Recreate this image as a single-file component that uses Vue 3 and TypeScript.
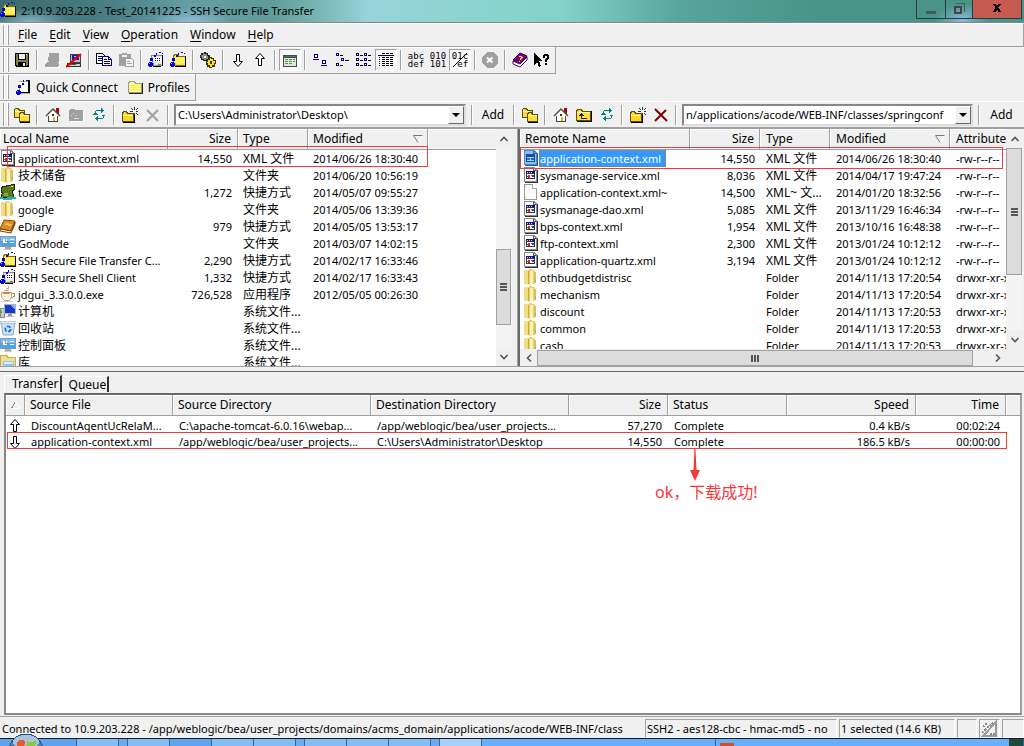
<script setup lang="ts">
import { ref } from 'vue'

interface FileRow {
  icon: string
  name: string
  size?: string
  type: string
  modified?: string
  attributes?: string
}
interface Tool {
  id: string
  label: string
  pressed?: boolean
  text?: [string, string]
}

const hasCjk = (s: string): boolean => /[\u4e00-\u9fff]/.test(s)

const menus = ['File', 'Edit', 'View', 'Operation', 'Window', 'Help']

const toolGroups: Tool[][] = [
  [{ id: 'save', label: 'Save' }],
  [{ id: 'connect', label: 'Connect' }, { id: 'disconnect', label: 'Disconnect' }],
  [{ id: 'copy', label: 'Copy' }, { id: 'paste', label: 'Paste' }],
  [{ id: 'shell', label: 'New terminal' }, { id: 'sshfolder', label: 'New file transfer' }],
  [{ id: 'gears', label: 'Settings' }],
  [{ id: 'down', label: 'Download' }, { id: 'up', label: 'Upload' }],
  [{ id: 'view', label: 'Transfer view', pressed: true }],
  [
    { id: 'large', label: 'Large icons' },
    { id: 'small', label: 'Small icons' },
    { id: 'list', label: 'List' },
    { id: 'details', label: 'Details', pressed: true },
  ],
  [
    { id: 'ascii', label: 'ASCII', text: ['abc', 'def'] },
    { id: 'binary', label: 'Binary', text: ['010', '101'] },
    { id: 'auto', label: 'Auto select', text: ['01c', '\u00a0ef'], pressed: true },
  ],
  [{ id: 'stop', label: 'Stop' }],
  [{ id: 'book', label: 'Help' }, { id: 'whats', label: 'Context help' }],
]

const localTools = [['folders'], ['home', 'upgray', 'refresh'], ['newfolder', 'delgray']]
const remoteTools = [['folders'], ['home', 'upfolder', 'refresh'], ['newfolder', 'delred']]

const localPath = ref('C:\\Users\\Administrator\\Desktop\\')
const remotePath = ref('n/applications/acode/WEB-INF/classes/springconf')

const localRows: FileRow[] = [
  { icon: 'xml', name: 'application-context.xml', size: '14,550', type: 'XML 文件', modified: '2014/06/26 18:30:40' },
  { icon: 'folder', name: '技术储备', type: '文件夹', modified: '2014/06/20 10:56:19' },
  { icon: 'toad', name: 'toad.exe', size: '1,272', type: '快捷方式', modified: '2014/05/07 09:55:27' },
  { icon: 'folder', name: 'google', type: '文件夹', modified: '2014/05/06 13:39:36' },
  { icon: 'diary', name: 'eDiary', size: '979', type: '快捷方式', modified: '2014/05/05 13:53:17' },
  { icon: 'panel', name: 'GodMode', type: '文件夹', modified: '2014/03/07 14:02:15' },
  { icon: 'sshfolder', name: 'SSH Secure File Transfer C...', size: '2,290', type: '快捷方式', modified: '2014/02/17 16:33:46' },
  { icon: 'shell', name: 'SSH Secure Shell Client', size: '1,332', type: '快捷方式', modified: '2014/02/17 16:33:43' },
  { icon: 'cup', name: 'jdgui_3.3.0.0.exe', size: '726,528', type: '应用程序', modified: '2012/05/05 00:26:30' },
  { icon: 'computer', name: '计算机', type: '系统文件...' },
  { icon: 'recycle', name: '回收站', type: '系统文件...' },
  { icon: 'panel', name: '控制面板', type: '系统文件...' },
  { icon: 'library', name: '库', type: '系统文件...' },
]

const remoteRows: FileRow[] = [
  { icon: 'xmlsel', name: 'application-context.xml', size: '14,550', type: 'XML 文件', modified: '2014/06/26 18:30:40', attributes: '-rw-r--r--' },
  { icon: 'xml', name: 'sysmanage-service.xml', size: '8,036', type: 'XML 文件', modified: '2014/04/17 19:47:24', attributes: '-rw-r--r--' },
  { icon: 'blank', name: 'application-context.xml~', size: '14,500', type: 'XML~ 文...', modified: '2014/01/20 18:32:56', attributes: '-rw-r--r--' },
  { icon: 'xml', name: 'sysmanage-dao.xml', size: '5,085', type: 'XML 文件', modified: '2013/11/29 16:46:34', attributes: '-rw-r--r--' },
  { icon: 'xml', name: 'bps-context.xml', size: '1,954', type: 'XML 文件', modified: '2013/10/16 16:48:38', attributes: '-rw-r--r--' },
  { icon: 'xml', name: 'ftp-context.xml', size: '2,300', type: 'XML 文件', modified: '2013/01/24 10:12:12', attributes: '-rw-r--r--' },
  { icon: 'xml', name: 'application-quartz.xml', size: '3,194', type: 'XML 文件', modified: '2013/01/24 10:12:12', attributes: '-rw-r--r--' },
  { icon: 'folder', name: 'othbudgetdistrisc', type: 'Folder', modified: '2014/11/13 17:20:54', attributes: 'drwxr-xr-x' },
  { icon: 'folder', name: 'mechanism', type: 'Folder', modified: '2014/11/13 17:20:54', attributes: 'drwxr-xr-x' },
  { icon: 'folder', name: 'discount', type: 'Folder', modified: '2014/11/13 17:20:53', attributes: 'drwxr-xr-x' },
  { icon: 'folder', name: 'common', type: 'Folder', modified: '2014/11/13 17:20:53', attributes: 'drwxr-xr-x' },
  { icon: 'folder', name: 'cash', type: 'Folder', modified: '2014/11/13 17:20:53', attributes: 'drwxr-xr-x' },
]

const transfers = [
  { icon: 'up', file: 'DiscountAgentUcRelaM...', src: 'C:\\apache-tomcat-6.0.16\\webap...', dst: '/app/weblogic/bea/user_projects...', size: '57,270', status: 'Complete', speed: '0.4 kB/s', time: '00:02:24' },
  { icon: 'down', file: 'application-context.xml', src: '/app/weblogic/bea/user_projects...', dst: 'C:\\Users\\Administrator\\Desktop', size: '14,550', status: 'Complete', speed: '186.5 kB/s', time: '00:00:00' },
]
</script>

<template>
  <svg class="defs" width="0" height="0" aria-hidden="true">
    <symbol id="save" viewBox="0 0 16 16">
      <path d="M1 1h14v14H2L1 14z" fill="#000" /><path d="M2 2h2v6h8V2h2v11h-1v1H3v-1H2z" fill="#808040" />
      <path d="M5 2h6v5H5z" fill="#f0f0f0" /><path d="M12 2h1v1h-1z" fill="#fff" /><path d="M4 10h8v4H4z" fill="#000" /><path d="M9 11h2v3H9z" fill="#e8e8e8" />
    </symbol>
    <symbol id="connect" viewBox="0 0 16 16">
      <path d="M5 1h10v8l-1 2h1v3l-2 1H1v-3l2-2h2L4 9z" fill="#a0a0a0" /><path d="M15 10h1v5H3v1h12l1-1z" fill="#fff" />
    </symbol>
    <symbol id="disconnect" viewBox="0 0 16 16">
      <path d="M4 2h10v8H4z" fill="#c0c0c0" stroke="#444" /><path d="M6 3h7v5H6z" fill="#0020c0" /><path d="M8 4h2v1H8z" fill="#8cf" />
      <path d="M1.500 11.500h13v3h-13z" fill="#d0d0d0" stroke="#333" /><path d="M3 12h7v1H3z" fill="#555" /><path d="M0 15L15 2" stroke="#f00000" stroke-width="2.200" shape-rendering="auto" />
    </symbol>
    <symbol id="copy" viewBox="0 0 16 16">
      <path d="M.5 1.500h6l2 2v8h-8z" fill="#fff" stroke="#000" /><path d="M2 4h4v1H2zM2 6h4v1H2zM2 8h4v1H2z" fill="#000080" />
      <path d="M6.500 4.500h6l3 3v6h-9z" fill="#fff" stroke="#000080" /><path d="M8 7h3v1H8zM8 9h6v1H8zM8 11h6v1H8z" fill="#000080" /><path d="M12.500 4v3.500H16" fill="none" stroke="#000080" />
    </symbol>
    <symbol id="paste" viewBox="0 0 16 16">
      <path d="M1 2h3V1h5v1h4v12H1z" fill="#a0a0a0" /><path d="M4 3h5v2H4z" fill="#f4f4f4" /><path d="M7.500 6.500h6l2 2v6h-8z" fill="#f4f4f4" stroke="#a0a0a0" /><path d="M9 9h3v1H9zM9 11h5v1H9z" fill="#a0a0a0" />
    </symbol>
    <symbol id="shell" viewBox="0 0 16 16">
      <path d="M3.500 3.500h11v10h-9z" fill="#e8e8e8" stroke="#888" /><path d="M14 3h1v11h-2v1H5v-1h9z" fill="#000" /><path d="M6 5h7v5H6z" fill="#fff" />
      <path d="M7 6h1v1H7zM9 6h1v1H9zM11 6h1v1h-1zM7 8h1v1H7zM9 8h1v1H9zM11 8h1v1h-1z" fill="#000" /><path d="M10 12h3v1h-3z" fill="#777" />
      <path d="M0 11h1v-1h3v1h1v3H4v1H1v-1H0zM2 6h3v3H2zM6 3h2v2H6zM8 1h1v2H8zM11 0h2v1h-2zM14 1h1v1h-1z" fill="#0000e0" /><path d="M1 11h1v1H1z" fill="#8cf" />
    </symbol>
    <symbol id="sshfolder" viewBox="0 0 16 16">
      <path d="M3.500 4.500l1-2h3l1 2h7v9h-12z" fill="#ffe830" stroke="#777700" /><path d="M5 6h10v1H5zM6 8h9v1H6zM6 10h9v1H6z" fill="#fff29a" /><path d="M15 4h1v11H5v-1h10z" fill="#000" />
      <path d="M0 11h1v-1h3v1h1v3H4v1H1v-1H0zM2 6h3v3H2zM6 3h2v2H6zM8 1h1v2H8zM11 0h2v1h-2zM14 1h1v1h-1z" fill="#0000e0" /><path d="M1 11h1v1H1z" fill="#8cf" />
    </symbol>
    <symbol id="quick" viewBox="0 0 16 16">
      <path d="M4 2h10v12H4z" fill="#fff" stroke="#aaa" /><path d="M13 1h2v13H5v-1h8z" fill="#000" /><path d="M4 3h9v9H6z" fill="#fff" />
      <path d="M1 12h1v-1h3v1h1v3H5v1H2v-1H1zM3 6h3v3H3zM7 4h2v2H7zM8 1h1v2H8zM11 1h2v1h-2z" fill="#0000e0" /><path d="M2 12h1v1H2z" fill="#8cf" />
    </symbol>
    <symbol id="profiles" viewBox="0 0 16 16">
      <path d="M.5 4.500l1-2h5l1 2h6v9H.5z" fill="#ffff80" stroke="#999" /><path d="M2 6h11v1H2zM2 8h11v1H2zM2 10h11v1H2z" fill="#f5e960" /><path d="M14 4h1v11H1v-1h13z" fill="#222" />
    </symbol>
    <symbol id="gears" viewBox="0 0 16 16">
      <path d="M4 0h2v1h2v2h2v4H8v2H3V8H1V6H0V3h1V1h3z" fill="#222" /><path d="M3 1h1v1h3v2h1v3H6v1H4V7H2V5H1V3h2z" fill="#909080" /><path d="M4 4h2v2H4z" fill="#fff" />
      <path d="M9 5h3v1h2v2h2v4h-1v3h-3v1H9v-1H7v-2H6V9h1V7h2z" fill="#3c3800" /><path d="M10 6h1v1h2v2h2v2h-1v2h-2v2h-2v-2H8v-2H7v-1h1V8h2z" fill="#ffe020" /><path d="M10 9h2v3h-2z" fill="#333" />
    </symbol>
    <symbol id="down" viewBox="0 0 16 16">
      <path d="M6.500 2.500h3v7h3L8 14.500 3.500 9.500h3z" fill="#fff" stroke="#000" shape-rendering="auto" />
    </symbol>
    <symbol id="up" viewBox="0 0 16 16">
      <path d="M6.500 13.500h3v-7h3L8 1.500 3.500 6.500h3z" fill="#fff" stroke="#000" shape-rendering="auto" />
    </symbol>
    <symbol id="view" viewBox="0 0 16 16">
      <path d="M1 3h14v12H1z" fill="#405048" /><path d="M2 4h12v1H2z" fill="#506890" /><path d="M2 6h12v8H2z" fill="#dcecd4" />
      <path d="M3 7h3v1H3zM7 7h3v1H7zM11 7h2v1h-2zM3 9h3v1H3zM7 9h3v1H7zM11 9h2v1h-2zM3 11h3v1H3zM7 11h3v1H7z" fill="#5f9060" />
    </symbol>
    <symbol id="large" viewBox="0 0 16 16">
      <path d="M2.500 2.500h3v3h-3zM10.500 8.500h3v3h-3z" fill="#fff" stroke="#000080" /><path d="M1 7h6v1H1zM9 13h6v1H9z" fill="#000080" />
    </symbol>
    <symbol id="small" viewBox="0 0 16 16">
      <path d="M2.500 1.500h2v2h-2zM7.500 6.500h2v2h-2zM2.500 11.500h2v2h-2z" fill="#fff" stroke="#000080" /><path d="M6 3h3v1H6zM11 8h4v1h-4zM6 13h3v1H6z" fill="#000" />
    </symbol>
    <symbol id="list" viewBox="0 0 16 16">
      <path d="M.5 1.500h2v2h-2zM.5 6.500h2v2h-2zM.5 11.500h2v2h-2zM8.500 1.500h2v2h-2zM8.500 6.500h2v2h-2zM8.500 11.500h2v2h-2z" fill="#fff" stroke="#000080" />
      <path d="M4 3h3v1H4zM4 8h3v1H4zM4 13h3v1H4zM12 3h3v1h-3zM12 8h3v1h-3zM12 13h3v1h-3z" fill="#000" />
    </symbol>
    <symbol id="details" viewBox="0 0 16 16">
      <path d="M4 1h3v1H4zM8 1h3v1H8zM12 1h3v1h-3z" fill="#000" /><path d="M0 3h16v1H0z" fill="#000080" />
      <path d="M1 5h1v1H1zM1 7h1v1H1zM1 9h1v1H1zM1 11h1v1H1zM1 13h1v1H1z" fill="#000080" />
      <path d="M4 5h3v1H4zM8 5h3v1H8zM12 5h3v1h-3zM4 7h3v1H4zM8 7h3v1H8zM12 7h3v1h-3zM4 9h3v1H4zM8 9h3v1H8zM12 9h3v1h-3zM4 11h3v1H4zM8 11h3v1H8zM12 11h3v1h-3zM4 13h3v1H4zM8 13h3v1H8zM12 13h3v1h-3z" fill="#000" />
    </symbol>
    <symbol id="stop" viewBox="0 0 16 16">
      <path d="M5 0h6l5 5v6l-5 5H5l-5-5V5z" fill="#a0a0a0" /><path d="M5 5.500l5.500 5M10.500 5.500L5 10.500" stroke="#fff" stroke-width="2" shape-rendering="auto" />
    </symbol>
    <symbol id="book" viewBox="0 0 16 16">
      <path d="M1 8L8 1l7 3-6 8z" fill="#800090" stroke="#200030" shape-rendering="auto" /><path d="M1 9l7 3 7-7v3l-7 7-7-3z" fill="#fff" stroke="#400050" shape-rendering="auto" />
      <path d="M7 4h3v1h1v1h-1v1H9v1H8V6h1V5H7zM7 9h1v1H7z" fill="#ffe000" />
    </symbol>
    <symbol id="whats" viewBox="0 0 16 16">
      <path d="M0 1l8 8H5l2 5-2 1-2-5-3 3z" fill="#000" /><path d="M9 3h1V2h4v1h1v4h-1v1h-1v2h-2V7h1V6h1V4h-2v2H9zM11 11h2v2h-2z" fill="#000" />
    </symbol>
    <symbol id="folders" viewBox="0 0 16 16">
      <path d="M.5 2.500l1-1h3l1 2h5v7H.5z" fill="#f7d848" stroke="#5b5000" /><path d="M5.500 7.500l1-2h3l1 2h5v7h-10z" fill="#ffdc38" stroke="#5b5000" /><path d="M6 8h9v1H6zM1 4h6v1H1z" fill="#fffac0" /><path d="M6 15h10V8" fill="none" stroke="#000" />
    </symbol>
    <symbol id="home" viewBox="0 0 16 16">
      <path d="M11 1h3v6h-3z" fill="#b00020" /><path d="M3.500 8.500h9v6h-9z" fill="#fff" stroke="#444" /><path d="M1 9L8 2l7 7" fill="#fff" stroke="#555530" stroke-width="1.500" shape-rendering="auto" />
      <path d="M7 7h2v2H7z" fill="#333" /><path d="M8 10h2v4H8z" fill="#d8b820" />
    </symbol>
    <symbol id="upgray" viewBox="0 0 16 16">
      <path d="M1 3l1-1h4l1 1h8v11H1z" fill="#a0a0a0" /><path d="M5 6h1v1H5zM3 8h1v1H3zM6 11h5v1H6zM8 8h1v1H8z" fill="#ddd" /><path d="M15 4h1v11H2v-1h13z" fill="#fff" />
    </symbol>
    <symbol id="upfolder" viewBox="0 0 16 16">
      <path d="M.5 4.500l1-2h4l1 2h8v9H.5z" fill="#ffdc38" stroke="#5b5000" /><path d="M1 5h13v1H1z" fill="#fffac0" /><path d="M5 6h1v1h1v1h1v1H6v2h5v1H5V9H3V8h1V7h1z" fill="#222" /><path d="M15 4v10H1" fill="none" stroke="#000" />
    </symbol>
    <symbol id="refresh" viewBox="0 0 16 16">
      <path d="M4 4h1V3h5V1h1v1h1v1h1v1h-1v1h-1v1h-1V4H5v2H4z" fill="#008080" />
      <path d="M3 6h3v1H3z" fill="#008080" transform="translate(8 2)" />
      <path d="M12 9h1v2h-1v1H7v2H6v-1H5v-1H4v-1h1v-1h1V9h1v2h5zM2 7h1V6h3v1h1v1H2z" fill="#008080" />
    </symbol>
    <symbol id="newfolder" viewBox="0 0 16 16">
      <path d="M.5 6.500l1-2h3l1 2h6v8H.5z" fill="#ffd428" stroke="#5b5000" /><path d="M1 8h9v1H1z" fill="#fffac0" /><path d="M12 7v8H1" fill="none" stroke="#000" />
      <path d="M12 0h1v3h-1zM12 6h1v2h-1zM8 4h3v1H8zM14 4h2v1h-2zM9 1h1v1H9zM10 2h1v1h-1zM15 1h1v1h-1zM14 2h1v1h-1zM14 6h1v1h-1zM15 7h1v1h-1z" fill="#333" />
    </symbol>
    <symbol id="delgray" viewBox="0 0 16 16"><path d="M2 3l11 11M13 3L2 14" stroke="#a0a0a0" stroke-width="2" shape-rendering="auto" /></symbol>
    <symbol id="delred" viewBox="0 0 16 16"><path d="M2 2l12 12M13 3L2 14" stroke="#800000" stroke-width="2" shape-rendering="auto" /></symbol>
    <symbol id="xml" viewBox="0 0 16 16">
      <path d="M1 0h10l3 3v12H1z" fill="#8a8a8a" /><path d="M2 1h8l3 3v10H2z" fill="#fff" /><path d="M10 1h1v2h2v1h-3z" fill="#555" /><path d="M14 3h1v13H2v-1h12z" fill="#333" />
      <path d="M3 4h9v8H3z" fill="#333" /><path d="M4 7h7v4H4z" fill="#fff" /><path d="M3 4h9v2H3z" fill="#101090" /><path d="M4 5h1v1H4zM6 5h1v1H6zM8 5h1v1H8z" fill="#d0d0ff" />
      <path d="M4 9h1V8h2v3H5v-1H4z" fill="#e02020" /><path d="M8 8h1v1H8z" fill="#20a020" /><path d="M9 8h2v2H9z" fill="#2040e0" />
    </symbol>
    <symbol id="xmlsel" viewBox="0 0 16 16">
      <path d="M1 0h10l3 3v12H1z" fill="#4a88cc" /><path d="M2 1h8l3 3v10H2z" fill="#8cc0f4" /><path d="M10 1h1v2h2v1h-3z" fill="#2a62a8" /><path d="M14 3h1v13H2v-1h12z" fill="#245a9a" />
      <path d="M3 4h9v8H3z" fill="#1c4e90" /><path d="M4 7h7v4H4z" fill="#9cd0ff" /><path d="M4 8h3v2H4z" fill="#5060a0" /><path d="M8 8h3v2H8z" fill="#2068c0" />
    </symbol>
    <symbol id="blank" viewBox="0 0 16 16"><path d="M1.500.5h8l4 4v11h-12z" fill="#fafafa" stroke="#999" /><path d="M9.500.5v4h4" fill="#fff" stroke="#aaa" /></symbol>
    <symbol id="folder" viewBox="0 0 16 16">
      <path d="M1 1h5l1 1v13H1z" fill="#f2dc84" /><path d="M6 0l6 1v14l-6 1z" fill="#ead070" /><path d="M7 2h3v13l-3 1z" fill="#fff1b4" /><path d="M5 2h1v13H5z" fill="#c9a93c" /><path d="M11 3h2v11h-2z" fill="#dcc05c" /><path d="M12 10h1v3h-1z" fill="#6cb8e0" />
    </symbol>
    <symbol id="toad" viewBox="0 0 16 16">
      <path d="M1 5l2-3 2 1 3-2h3l1-1h2v2l1 1-1 3-2 1 1 3 1 3H2L1 12l2-4H1z" fill="#5a7a20" stroke="#1c2800" /><path d="M11 2h2v1h-2z" fill="#ff0" /><path d="M4 9h4v3H4z" fill="#93a840" /><path d="M0 13h3v1h4v-1h9v2h-4v1H3v-1H0z" fill="#20b0c0" />
    </symbol>
    <symbol id="diary" viewBox="0 0 16 16">
      <path d="M4 2l11 1-4 10-11-2z" fill="#e08a20" stroke="#8a4a08" shape-rendering="auto" /><path d="M0 11l11 2 4-9v2l-4 9-11-2z" fill="#fff" stroke="#7a3c00" shape-rendering="auto" /><path d="M6 5l6 1-1 2-6-1z" fill="#f7bd60" />
    </symbol>
    <symbol id="panel" viewBox="0 0 16 16">
      <path d="M.5 1.500h15v10H.5z" fill="#4ba4e8" stroke="#7a9ab8" /><path d="M1 2h14v4H1z" fill="#78c2f6" /><circle cx="5" cy="6" r="2.500" fill="#fff" /><path d="M5 4v2h2" fill="none" stroke="#f08020" /><path d="M10 4h4v1h-4zM10 7h4v1h-4z" fill="#fff" /><path d="M5 12h6v2H5z" fill="#aaa" /><path d="M4 14h8v1H4z" fill="#ccc" />
    </symbol>
    <symbol id="cup" viewBox="0 0 16 16">
      <path d="M1.500 6.500h10v5l-2 3h-5l-3-3z" fill="#fffaf0" stroke="#c8a070" shape-rendering="auto" /><path d="M3 6h7v2H3z" fill="#e08050" /><path d="M12 7.500h2v3l-2 1" fill="none" stroke="#b58850" /><path d="M4 4h5v1H4zM6 2h3v1H6zM8 0h1v2H8z" fill="#c8a888" /><path d="M1 15h12v1H1z" fill="#e8d8c0" />
    </symbol>
    <symbol id="computer" viewBox="0 0 16 16">
      <path d="M0 5h4v9H0z" fill="#c8ccd0" stroke="#888" /><path d="M1 8h1v2H1z" fill="#20b030" /><path d="M4.500 1.500h11v9h-11z" fill="#1838c0" stroke="#a8b4c4" /><path d="M10 2h5v5z" fill="#80b0ff" /><path d="M8 11h4v2H8z" fill="#999" /><path d="M6 13h8v1H6z" fill="#bbb" />
    </symbol>
    <symbol id="recycle" viewBox="0 0 16 16">
      <path d="M1 2h14l-2 13H3z" fill="#c8e2f6" stroke="#94aabd" shape-rendering="auto" /><path d="M0 1h16v2H0z" fill="#e6f0f8" stroke="#94aabd" stroke-width=".5" /><circle cx="8" cy="9" r="2.700" fill="none" stroke="#1c70e0" stroke-width="1.800" stroke-dasharray="4 1.600" shape-rendering="auto" />
    </symbol>
    <symbol id="library" viewBox="0 0 16 16">
      <path d="M.5 1.500h6l1 2h8v12H.5z" fill="#f3df92" stroke="#c8a850" /><path d="M3 7h11v8H3z" fill="#8cc8ee" /><path d="M4 8h9v2H4z" fill="#d8f0ff" />
    </symbol>
    <symbol id="sortdown" viewBox="0 0 10 8"><path d="M1 .5h8.500L5.500 7.500" fill="none" stroke="#fff" shape-rendering="auto" /><path d="M9.500.5H.5l4.500 7" fill="none" stroke="#777" shape-rendering="auto" /></symbol>
    <symbol id="chev" viewBox="0 0 10 10"><path d="M1.500 7L5 3.500 8.500 7" fill="none" stroke="#555" stroke-width="1.600" shape-rendering="auto" /></symbol>
  </svg>

  <main class="window">
    <header class="title">
      <svg class="ico"><use href="#sshfolder" /></svg>
      <h1>2:10.9.203.228 - Test_20141225 - SSH Secure File Transfer</h1>
      <div class="winbtns">
        <button class="min" aria-label="Minimize"><i></i></button>
        <button class="max" aria-label="Restore">
          <svg width="12" height="12" viewBox="0 0 12 12"><path d="M3 .5h8.500V9" fill="none" stroke="#555" /><path d="M2 4h6v6H2z" fill="none" stroke="#444" stroke-width="2" /></svg>
        </button>
        <button class="close" aria-label="Close">
          <svg width="10" height="10" viewBox="0 0 10 10"><path d="M1 1h3l1 2 1-2h3L6.500 4.500 9 8.500H6L5 6.500 4 8.500H1l2.500-4z" fill="#000" /></svg>
        </button>
      </div>
    </header>

    <nav class="menu">
      <span class="grip"></span>
      <button v-for="m in menus" :key="m"><u>{{ m[0] }}</u>{{ m.slice(1) }}</button>
    </nav>

    <div class="bar tools" role="toolbar" aria-label="Standard">
      <span class="grip"></span>
      <template v-for="(g, i) in toolGroups" :key="i">
        <span v-if="i" class="sep"></span>
        <button v-for="t in g" :key="t.id" class="tool" :class="{ pressed: t.pressed, slash: t.id === 'auto' }" :aria-label="t.label">
          <span v-if="t.text" class="bits">{{ t.text[0] }}<br />{{ t.text[1] }}</span>
          <svg v-else class="ico"><use :href="'#' + t.id" /></svg>
        </button>
      </template>
    </div>

    <div class="bar quick">
      <span class="grip"></span>
      <button><svg class="ico"><use href="#quick" /></svg>Quick Connect</button>
      <button><svg class="ico"><use href="#profiles" /></svg>Profiles</button>
    </div>

    <div class="paths">
      <div class="path">
        <span class="grip"></span>
        <template v-for="(g, i) in localTools" :key="i">
          <button v-for="t in g" :key="t" class="tool wide" :aria-label="'Local ' + t"><svg class="ico"><use :href="'#' + t" /></svg></button>
          <span class="sep"></span>
        </template>
        <div class="combo">
          <input v-model="localPath" aria-label="Local path" />
          <button aria-label="Local path list"><i></i></button>
        </div>
        <span class="sep"></span>
        <button class="add">Add</button>
      </div>
      <div class="path remote">
        <span class="sep"></span>
        <template v-for="(g, i) in remoteTools" :key="i">
          <button v-for="t in g" :key="t" class="tool wide" :aria-label="'Remote ' + t"><svg class="ico"><use :href="'#' + t" /></svg></button>
          <span class="sep"></span>
        </template>
        <div class="combo">
          <input v-model="remotePath" aria-label="Remote path" />
          <button aria-label="Remote path list"><i></i></button>
        </div>
        <span class="sep"></span>
        <button class="add">Add</button>
      </div>
    </div>

    <div class="panes">
      <section class="pane local">
        <div class="listing">
          <table>
            <colgroup><col class="w168" /><col class="w70" /><col class="w70" /><col class="w120" /><col /></colgroup>
            <thead>
              <tr><th>Local Name</th><th class="num">Size</th><th>Type</th><th>Modified<svg class="sort"><use href="#sortdown" /></svg></th><th></th></tr>
            </thead>
            <tbody>
              <tr v-for="r in localRows" :key="r.name">
                <td class="name" :class="{ cjk: hasCjk(r.name) }"><svg class="ico"><use :href="'#' + r.icon" /></svg><span>{{ r.name }}</span></td>
                <td class="num">{{ r.size }}</td>
                <td class="cjk">{{ r.type }}</td>
                <td>{{ r.modified }}</td>
                <td></td>
              </tr>
            </tbody>
          </table>
          <div class="mark mark-local"></div>
        </div>
        <div class="vscroll">
          <button aria-label="Scroll up"><svg><use href="#chev" /></svg></button>
          <div class="track low"><div class="thumb"><i></i><i></i><i></i></div></div>
          <button class="flip" aria-label="Scroll down"><svg><use href="#chev" /></svg></button>
        </div>
      </section>

      <section class="pane remote-pane">
        <div class="stack">
          <div class="listing">
            <table>
              <colgroup><col class="w170" /><col class="w70" /><col class="w70" /><col class="w120" /><col /></colgroup>
              <thead>
                <tr><th class="first">Remote Name</th><th class="num">Size</th><th>Type</th><th>Modified<svg class="sort"><use href="#sortdown" /></svg></th><th class="last">Attribute</th></tr>
              </thead>
              <tbody>
                <tr v-for="(r, i) in remoteRows" :key="r.name" :class="{ selected: i === 0 }">
                  <td class="name"><svg class="ico"><use :href="'#' + r.icon" /></svg><span>{{ r.name }}</span></td>
                  <td class="num">{{ r.size }}</td>
                  <td :class="{ cjk: hasCjk(r.type) }">{{ r.type }}</td>
                  <td>{{ r.modified }}</td>
                  <td>{{ r.attributes }}</td>
                </tr>
              </tbody>
            </table>
            <div class="mark mark-remote"></div>
          </div>
          <div class="hscroll">
            <button class="left" aria-label="Scroll left"><svg><use href="#chev" /></svg></button>
            <div class="thumb"><i></i><i></i><i></i></div>
            <span class="rest"></span>
            <button class="right" aria-label="Scroll right"><svg><use href="#chev" /></svg></button>
          </div>
        </div>
        <div class="vscroll">
          <button aria-label="Scroll up"><svg><use href="#chev" /></svg></button>
          <div class="track high"><div class="thumb"><i></i><i></i><i></i></div></div>
          <button class="flip" aria-label="Scroll down"><svg><use href="#chev" /></svg></button>
          <span class="corner"></span>
        </div>
      </section>
    </div>

    <section class="transfer">
      <div class="tabs" role="tablist">
        <button role="tab" aria-selected="true" class="on">Transfer</button>
        <button role="tab" aria-selected="false">Queue</button>
      </div>
      <div class="frame">
        <table>
          <colgroup><col class="w19" /><col class="w148" /><col class="w198" /><col class="w198" /><col class="w99" /><col class="w119" /><col class="w129" /><col class="w90" /><col /></colgroup>
          <thead>
            <tr>
              <th class="mid"><svg class="tri" viewBox="0 0 10 8"><path d="M.5 7.500L4.500.5" stroke="#888" fill="none" /><path d="M4.500.5l4.500 7H.5" stroke="#fff" fill="none" /></svg></th>
              <th>Source File</th><th>Source Directory</th><th>Destination Directory</th><th class="num">Size</th><th>Status</th><th class="num">Speed</th><th class="num">Time</th><th></th>
            </tr>
          </thead>
          <tbody>
            <tr v-for="t in transfers" :key="t.file">
              <td class="mid"><svg class="ico"><use :href="'#' + t.icon" /></svg></td>
              <td>{{ t.file }}</td><td>{{ t.src }}</td><td>{{ t.dst }}</td><td class="num">{{ t.size }}</td><td>{{ t.status }}</td><td class="num">{{ t.speed }}</td><td class="num">{{ t.time }}</td><td></td>
            </tr>
          </tbody>
        </table>
        <div class="mark mark-transfer"></div>
        <div class="note">
          <svg width="10" height="32" viewBox="0 0 10 32"><path d="M4.500 0h1l1 21H10L5 32 0 21h3.500z" fill="#f83838" /></svg>
          <p>ok，下载成功!</p>
        </div>
      </div>
    </section>

    <footer class="status">
      <span class="conn">Connected to 10.9.203.228 - /app/weblogic/bea/user_projects/domains/acms_domain/applications/acode/WEB-INF/class</span>
      <span class="cell ssh">SSH2 - aes128-cbc - hmac-md5 - no</span>
      <span class="cell sel">1 selected (14.6 KB)</span>
      <span class="cell s1"></span>
      <span class="cell s2"><svg width="18" height="18" viewBox="0 0 18 18"><path d="M2 16L15 2v14z" fill="none" stroke="#999" stroke-width="2" /><path d="M2 7l4-4M4 10l8-7M1 13l3-3M9 14h5" stroke="#888" stroke-width="2" stroke-dasharray="2 1" /></svg></span>
      <span class="cell s3"></span>
    </footer>

    <div class="taskbar">
      <span class="orb"><svg width="36" height="36" viewBox="0 0 36 36"><circle cx="18" cy="18" r="17" fill="#4f7fae" stroke="#25507c" /><ellipse cx="18" cy="9" rx="13" ry="7" fill="#a8c4dc" /><path d="M9 9q4-4 8-1l-1 9-8 2z" fill="#e8582c" /><path d="M19 8q5 3 9-1l-1 9-9 1z" fill="#8cc63f" /></svg></span>
      <span class="t0"></span><span class="t1"></span><span class="t2"></span><span class="t1"></span><span class="t1 on"></span><span class="t1"></span><span class="t1"></span><span class="t2"></span><span class="t1"></span><span class="t1"></span><span class="t1"></span><span class="t2"></span><span class="t1 lit"></span>
      <span class="fill"></span><span class="tray"></span><span class="desk"></span>
    </div>
  </main>
</template>

<style>
body { overflow: hidden; }
</style>

<style scoped>
.defs { position: absolute; }
.window {
  height: 100vh; display: flex; flex-direction: column; overflow: hidden;
  background: #f0f0f0; color: #000;
  font: 11px/17px "Noto Sans", "Noto Sans CJK SC", sans-serif;
}
.window * { box-sizing: border-box; }
button, input { font: inherit; color: inherit; margin: 0; padding: 0; border: 0; background: none; border-radius: 0; }
svg { shape-rendering: crispEdges; flex: none; }
.ico { width: 16px; height: 16px; display: block; }

.title {
  flex: none; height: 23px; display: flex; align-items: flex-start; padding-left: 0;
  border-bottom: 1px solid #888;
  background:
    radial-gradient(ellipse 26px 16px at 962px 20px, #8bb8dc, transparent),
    radial-gradient(ellipse 40px 14px at 30px 22px, #85b4c4, transparent),
    radial-gradient(ellipse 40px 14px at 190px 22px, #8ebcd8, transparent),
    linear-gradient(90deg, #3b6a6c 0, #4a7f84 110px, #659fa4 190px, #5f9a98 270px, #7bbab8 325px, #98d4dc 370px, #90d4d2 440px, #84d2c8 560px, #58a59b 680px, #4a9389 820px, #4a9389 100%);
}
.title .ico { margin-top: 2px; }
.title h1 { margin: 1px 0 0 5px; font-size: 11px; line-height: 20px; font-weight: 400; flex: 1; white-space: nowrap; }
.winbtns { display: flex; height: 19px; border: 1px solid #1f3f40; border-top: 0; margin-right: 2px; }
.winbtns button { display: flex; justify-content: center; align-items: center; border-right: 1px solid #1f3f40; }
.winbtns .min { width: 29px; }
.winbtns .min i { width: 10px; height: 3px; background: #4a5656; margin-top: 7px; }
.winbtns .max { width: 27px; }
.winbtns .close { width: 48px; background: #c75a50; border-right: 0; padding-bottom: 2px; }

.grip { flex: none; width: 6px; margin: 1px 0 1px 3px; border: solid #a0a0a0; border-width: 0 1px; background: linear-gradient(90deg, #fff 1px, #f0f0f0 1px, #f0f0f0 3px, #fff 3px); }
.menu { flex: none; height: 24px; display: flex; border-top: 1px solid #fff; border-bottom: 1px solid #a0a0a0; border-right: 1px solid #a0a0a0; padding-left: 0; font-size: 12px; }
.menu button { margin-left: 10px; padding: 0 1px 2px; }
.menu u { text-underline-offset: 2px; }
.menu .grip + button { margin-left: 8px; }
.bar { flex: none; align-self: flex-start; height: 27px; display: flex; align-items: center; border: solid #a0a0a0; border-width: 0 1px 1px 0; box-shadow: inset 0 1px #fff; }
.bar .grip, .path .grip { align-self: stretch; }
.tools { padding-right: 2px; }
.tools .grip { margin-right: 2px; }
.tool { flex: none; width: 22px; height: 22px; display: flex; align-items: center; justify-content: center; }
.tool.wide { width: 23px; }
.tool.pressed { background: #f8f8f8; border: 1px solid #a0a0a0; border-right-color: #fff; border-bottom-color: #fff; }
.tool.slash { background: linear-gradient(135deg, transparent 48%, #000 48%, #000 52%, transparent 52%) center/14px 14px no-repeat #f8f8f8; }
.bits { font: 9px/8px "DejaVu Sans Mono", monospace; }
.sep { flex: none; width: 8px; height: 20px; background: linear-gradient(90deg, transparent 3px, #a0a0a0 3px, #a0a0a0 4px, #fff 4px, #fff 5px, transparent 5px); }
.quick { font-size: 12px; padding-right: 5px; }
.quick button { display: flex; align-items: center; gap: 5px; margin-left: 6px; }
.quick button + button { margin-left: 10px; gap: 4px; }

.paths { flex: none; display: grid; grid-template-columns: 510fr 514fr; height: 28px; border-top: 1px solid #fff; border-bottom: 2px solid #a0a0a0; }
.path { display: flex; align-items: center; min-width: 0; }
.path .grip { margin-right: 1px; }
.combo { flex: 1; min-width: 0; height: 22px; margin: 0 2px 0 2px; display: flex; background: #fff; border: 2px solid; border-color: #888 #ddd #ddd #888; }
.combo input { flex: 1; min-width: 0; padding-left: 2px; font-size: 11px; outline: 0; }
.combo button { width: 16px; background: #f0f0f0; border: 1px solid; border-color: #fff #696969 #696969 #fff; display: flex; align-items: center; justify-content: center; }
.combo i { border: solid transparent; border-width: 4px 4px 0; border-top-color: #000; }
.add { width: 34px; font-size: 12px; }
.path.remote .add { width: 41px; padding-right: 4px; }

.panes { flex: none; display: grid; grid-template-columns: 518fr 506fr; height: 238px; border-bottom: 1px solid #a0a0a0; background: #fff; }
.pane { display: flex; min-width: 0; min-height: 0; }
.local { border-right: 1px solid #a0a0a0; padding-right: 5px; background: #f0f0f0; }
.remote-pane { border-left: 2px solid #696969; }
.stack { flex: 1; min-width: 0; display: flex; flex-direction: column; }
.listing { flex: 1; min-width: 0; min-height: 0; position: relative; overflow: hidden; background: #fff; }
table { width: 100%; table-layout: fixed; border-collapse: separate; border-spacing: 0; }
th, td { padding: 0 0 0 5px; white-space: nowrap; overflow: hidden; text-align: left; font-weight: 400; }
th { height: 21px; font-size: 12px; line-height: 20px; background: #f0f0f0; border: 1px solid #a0a0a0; border-width: 0 1px 1px 0; box-shadow: inset 1px 1px #fff; }
th:last-child { border-right: 0; }
th:first-child { padding-left: 3px; }
th.first { padding-left: 5px; }
td { height: 17px; line-height: 17px; }
.num { text-align: right; padding: 0 6px 0 0; }
.cjk { font-size: 12px; }
.name { padding: 0; }
.name .ico { float: left; }
.name span { padding-left: 2px; display: inline-block; height: 17px; }
.remote-pane .name { padding-left: 3px; }
.remote-pane .name span { padding-left: 1px; }
.remote-pane td + td, .remote-pane th + th { padding-left: 6px; }
.remote-pane .num { padding-right: 5px; }
.selected .name span { background: #3399ff; color: #fff; outline: 1px dotted #c07020; outline-offset: -1px; padding-right: 5px; }
.sort { float: right; width: 10px; height: 8px; margin: 6px 4px 0 0; }
.w168 { width: 168px; } .w170 { width: 170px; } .w70 { width: 70px; } .w120 { width: 120px; }
.w19 { width: 19px; } .w148 { width: 148px; } .w198 { width: 198px; } .w99 { width: 99px; } .w119 { width: 119px; } .w129 { width: 129px; } .w90 { width: 90px; }

.mark { position: absolute; border: 1px solid #f03c3c; pointer-events: none; }
.mark-local { left: 7px; top: 17px; width: 421px; height: 21px; }
.mark-remote { left: 0; right: 3px; top: 18px; height: 22px; }
.mark-transfer { left: 1px; right: 13px; top: 37px; height: 17px; }

.vscroll { flex: none; width: 16px; display: flex; flex-direction: column; background: #f0f0f0; }
.remote-pane .vscroll { width: 18px; padding-right: 1px; }
.vscroll button { height: 19px; display: flex; align-items: center; justify-content: center; }
.vscroll svg, .hscroll svg { width: 10px; height: 10px; }
.flip svg { transform: rotate(180deg); }
.left svg { transform: rotate(-90deg); }
.right svg { transform: rotate(90deg); }
.track { flex: 1; background: #f4f4f4; display: flex; flex-direction: column; }
.thumb { background: #dcdcdc; border: 1px solid #a0a0a0; display: flex; align-items: center; justify-content: center; gap: 1px; }
.vscroll .thumb { flex-direction: column; margin-right: 1px; height: 76px; }
.high .thumb { height: 127px; }
.low { padding-top: 101px; }
.thumb i { background: #555; }
.vscroll .thumb i { width: 7px; height: 2px; }
.hscroll .thumb i { width: 2px; height: 7px; }
.corner { height: 17px; }
.hscroll { height: 17px; display: flex; padding-top: 1px; background: #f0f0f0; }
.hscroll button { width: 17px; display: flex; align-items: center; justify-content: center; }
.hscroll .thumb { flex: 1; }
.rest { width: 16px; }

.transfer { flex: 1; min-height: 0; display: flex; flex-direction: column; margin-top: 4px; border-top: 1px solid #696969; padding: 3px 2px 1px 4px; font-size: 11px; }
.tabs { flex: none; height: 18px; display: flex; align-items: flex-start; font-size: 12px; }
.tabs button { height: 16px; line-height: 16px; padding: 0 1px 0 7px; border-right: 2px solid #333; border-top: 1px solid #fff; margin-top: 1px; }
.tabs .on { height: 17px; margin-top: 0; line-height: 16px; border-left: 1px solid #fff; }
.frame { flex: 1; min-height: 0; position: relative; background: #fff; border: 2px solid #696969; border-color: #696969 #a0a0a0 #888 #888; }
.frame th { height: 21px; }
.frame td { height: 16px; line-height: 16px; padding-left: 6px; }
.frame td.num { padding: 0 6px 0 0; }
.frame tbody::before { content: ""; display: table-row; height: 2px; }
.frame td.mid, .frame th.mid { padding: 0 0 0 1px; }
.tri { width: 10px; height: 8px; display: block; margin: 0 auto; }
.note { position: absolute; left: 649px; top: 54px; color: #f83838; }
.note svg { margin-left: 35px; display: block; shape-rendering: auto; }
.note p { margin: 0; font-size: 16px; line-height: 22px; white-space: nowrap; }

.status { flex: none; height: 22px; display: flex; align-items: stretch; border-top: 1px solid #a0a0a0; padding-top: 2px; gap: 2px; line-height: 19px; white-space: nowrap; }
.conn { flex: 1; min-width: 0; overflow: hidden; padding-left: 2px; }
.cell { flex: none; overflow: hidden; border: 1px solid; border-color: #a0a0a0 #fff #fff #a0a0a0; padding-left: 1px; height: 19px; line-height: 17px; }
.ssh { width: 192px; } .sel { width: 116px; } .s1 { width: 20px; } .s2 { width: 21px; } .s3 { width: 22px; }

.taskbar { flex: none; height: 8px; position: relative; display: flex; background: #5b9de4; border-top: 1px solid #0c1c2c; }
.taskbar > span { border-right: 1px solid #2c68a8; }
.taskbar .orb { position: absolute; left: 8px; top: -6px; height: 14px; overflow: hidden; border: 0; }
.t0 { width: 77px; background: #62a2ea; }
.t1 { width: 42px; background: #86bcf2; }
.t1.on { background: #62a4ea; }
.t1.lit { background: #a8d0fa; }
.t2 { width: 9px; background: #6cacee; }
.fill { flex: 1; background: #69aef8; }
.taskbar .tray { width: 22px; background: #e04a20; border: solid #69aef8; border-width: 4px 4px 0; }
.desk { width: 286px; background: linear-gradient(90deg, #69aef8 271px, #23483c 271px); }
</style>
